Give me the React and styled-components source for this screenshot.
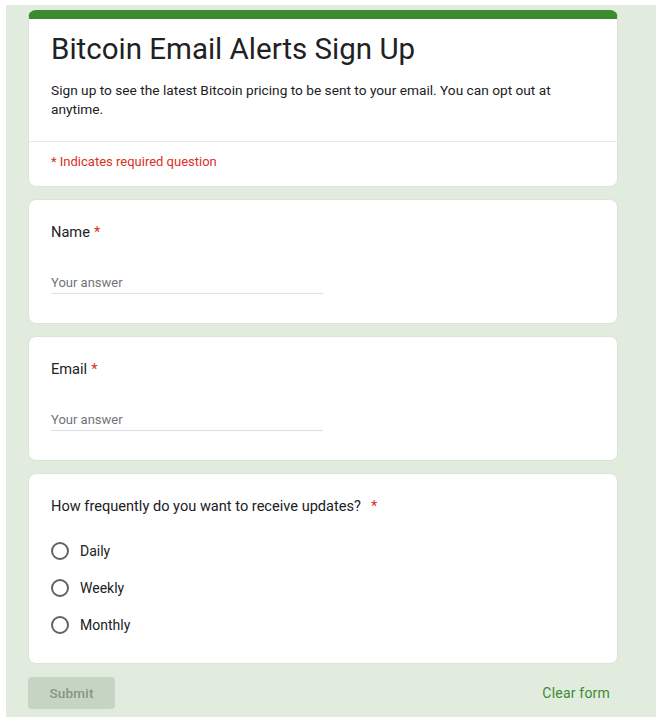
import React from "react";
import styled, { createGlobalStyle } from "styled-components";

const Global = createGlobalStyle`
  html, body { margin: 0; padding: 0; background: #ffffff; }
  body { font-family: Roboto, "Noto Sans", Arial, sans-serif; color: #202124; }
  * { box-sizing: border-box; }
`;

const Page = styled.div`
  margin: 5px 9px 9px 6px;
  background: #e1ecdf;
  padding: 5px 38px 8px 22px;
  display: flex;
  flex-direction: column;
  gap: 12px;
`;

const Card = styled.section`
  background: #ffffff;
  border: 1px solid #dce3da;
  border-radius: 8px;
  padding: ${(p) => p.$pad || "20px 22px 29px"};
  display: flex;
  flex-direction: column;
`;

const HeaderCard = styled.section`
  background: #ffffff;
  border: 1px solid #dce3da;
  border-top: 9px solid #3d8b2f;
  border-radius: 8px;
  display: flex;
  flex-direction: column;
`;

const HeaderTop = styled.div`
  padding: 10px 22px 22px;
  display: flex;
  flex-direction: column;
  gap: 12px;
`;

const Title = styled.h1`
  margin: 0;
  font-size: 29.5px;
  line-height: 40px;
  font-weight: 400;
  color: #202124;
`;

const Desc = styled.p`
  margin: 0;
  max-width: 520px;
  font-size: 13.7px;
  line-height: 19px;
  color: #202124;
`;

const Divider = styled.div`
  height: 1px;
  background: #e6e8e6;
`;

const Required = styled.div`
  padding: 10px 22px 15px;
  font-size: 13px;
  line-height: 19px;
  color: #d93025;
`;

const Label = styled.div`
  font-size: 14.6px;
  line-height: 24px;
  color: #202124;
`;

const Star = styled.span`
  color: #d93025;
  margin-left: ${(p) => p.$gap || 4}px;
`;

const Answer = styled.input`
  margin-top: 29px;
  width: 50%;
  height: 21px;
  border: none;
  border-bottom: 1px solid #e0e0e0;
  padding: 0 0 2px;
  font-family: Roboto, "Noto Sans", Arial, sans-serif;
  font-size: 13px;
  line-height: 19px;
  color: #202124;
  background: transparent;
  outline: none;
  &::placeholder { color: #70757a; opacity: 1; }
`;

const Options = styled.div`
  margin-top: 14px;
  display: flex;
  flex-direction: column;
`;

const Option = styled.label`
  height: 37px;
  display: flex;
  align-items: center;
  gap: 11px;
  font-size: 14px;
  color: #202124;
  cursor: pointer;
`;

const Radio = styled.span`
  width: 18px;
  height: 18px;
  border: 2px solid #5f6368;
  border-radius: 50%;
  flex: none;
`;

const Footer = styled.div`
  margin-top: 1px;
  display: flex;
  align-items: center;
  justify-content: space-between;
  padding-right: 8px;
`;

const SubmitButton = styled.button`
  width: 87px;
  height: 32px;
  border: none;
  border-radius: 4px;
  background: #c6d4c4;
  color: #889587;
  font-family: Roboto, "Noto Sans", Arial, sans-serif;
  font-size: 13.5px;
  font-weight: 500;
  letter-spacing: 0.2px;
`;

const ClearLink = styled.span`
  color: #3d8b2f;
  font-size: 14px;
  font-weight: 400;
  letter-spacing: 0.2px;
  cursor: pointer;
`;

const options = ["Daily", "Weekly", "Monthly"];

export default function App() {
  return (
    <>
      <Global />
      <Page>
        <HeaderCard>
          <HeaderTop>
            <Title>Bitcoin Email Alerts Sign Up</Title>
            <Desc>
              Sign up to see the latest Bitcoin pricing to be sent to your email. You can opt out at anytime.
            </Desc>
          </HeaderTop>
          <Divider />
          <Required>* Indicates required question</Required>
        </HeaderCard>

        <Card>
          <Label>
            Name<Star>*</Star>
          </Label>
          <Answer placeholder="Your answer" />
        </Card>

        <Card>
          <Label>
            Email<Star>*</Star>
          </Label>
          <Answer placeholder="Your answer" />
        </Card>

        <Card $pad="20px 22px 20px">
          <Label>
            How frequently do you want to receive updates?<Star $gap={10}>*</Star>
          </Label>
          <Options>
            {options.map((o) => (
              <Option key={o}>
                <Radio />
                {o}
              </Option>
            ))}
          </Options>
        </Card>

        <Footer>
          <SubmitButton>Submit</SubmitButton>
          <ClearLink>Clear form</ClearLink>
        </Footer>
      </Page>
    </>
  );
}
